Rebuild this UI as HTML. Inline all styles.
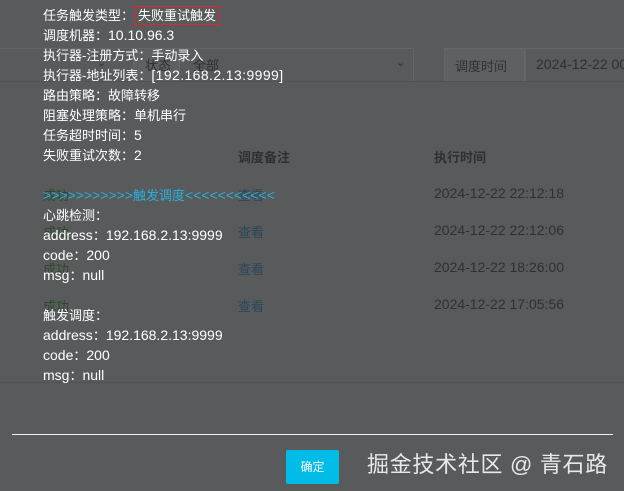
<!DOCTYPE html>
<html><head><meta charset="utf-8"><style>
html,body{margin:0;padding:0;}
body{width:624px;height:491px;background:#585a5c;position:relative;overflow:hidden;font-family:"Liberation Sans","Noto Sans CJK SC",sans-serif;}
.a{position:absolute;white-space:nowrap;}
.bg{color:#2e3133;font-size:13px;}
.w{color:#fff;font-size:13px;left:43px;}
.l{font-size:14px;}
</style></head><body>
<div class="a" style="left:0;top:48px;width:133px;height:32px;border:1px solid #626466;border-left:none;"></div>
<div class="a bg" style="left:97px;top:56px;font-size:11px;">⌄</div>
<div class="a" style="left:134px;top:48px;width:44px;height:32px;background:#5e6062;border:1px solid #646668;"></div>
<div class="a bg" style="left:145px;top:55px;">状态</div>
<div class="a" style="left:179px;top:48px;width:233px;height:32px;border:1px solid #646668;"></div>
<div class="a bg" style="left:193px;top:55px;">全部</div>
<div class="a bg" style="left:396px;top:56px;font-size:11px;">⌄</div>
<div class="a" style="left:444px;top:48px;width:80px;height:32px;background:#5e6062;border:1px solid #646668;"></div>
<div class="a bg" style="left:455px;top:56px;">调度时间</div>
<div class="a" style="left:524px;top:48px;width:110px;height:32px;border:1px solid #646668;"></div>
<div class="a bg l" style="left:536px;top:56px;">2024-12-22 00</div>
<div class="a" style="left:0;top:81px;width:624px;height:1px;background:#505254;"></div>
<div class="a bg" style="left:238px;top:147px;font-weight:bold;">调度备注</div>
<div class="a bg" style="left:434px;top:147px;font-weight:bold;">执行时间</div>
<div class="a bg" style="left:43px;top:185px;color:#2b4a2b;">成功</div>
<div class="a bg" style="left:238px;top:185px;color:#2b4757;">查看</div>
<div class="a bg l" style="left:434px;top:185px;">2024-12-22 22:12:18</div>
<div class="a bg" style="left:43px;top:222px;color:#2b4a2b;">成功</div>
<div class="a bg" style="left:238px;top:222px;color:#2b4757;">查看</div>
<div class="a bg l" style="left:434px;top:222px;">2024-12-22 22:12:06</div>
<div class="a bg" style="left:43px;top:259px;color:#2b4a2b;">成功</div>
<div class="a bg" style="left:238px;top:259px;color:#2b4757;">查看</div>
<div class="a bg l" style="left:434px;top:259px;">2024-12-22 18:26:00</div>
<div class="a bg" style="left:43px;top:296px;color:#2b4a2b;">成功</div>
<div class="a bg" style="left:238px;top:296px;color:#2b4757;">查看</div>
<div class="a bg l" style="left:434px;top:296px;">2024-12-22 17:05:56</div>
<div class="a" style="left:0;top:382px;width:624px;height:1px;background:#505254;"></div>
<div class="a w" style="top:5px;">任务触发类型：<span style="border:1.5px solid #e0262b;padding:1px 3px;">失败重试触发</span></div>
<div class="a w" style="top:25px;">调度机器：<span class="l">10.10.96.3</span></div>
<div class="a w" style="top:45px;">执行器-注册方式：手动录入</div>
<div class="a w" style="top:65px;">执行器-地址列表：<span class="l" style="letter-spacing:0.4px">[192.168.2.13:9999]</span></div>
<div class="a w" style="top:85px;">路由策略：故障转移</div>
<div class="a w" style="top:105px;">阻塞处理策略：单机串行</div>
<div class="a w" style="top:125px;">任务超时时间：<span class="l">5</span></div>
<div class="a w" style="top:145px;">失败重试次数：<span class="l">2</span></div>
<div class="a w" style="top:185px;color:#2ab0dc;"><span class="l">&gt;&gt;&gt;&gt;&gt;&gt;&gt;&gt;&gt;&gt;&gt;</span>触发调度<span class="l">&lt;&lt;&lt;&lt;&lt;&lt;&lt;&lt;&lt;&lt;&lt;</span></div>
<div class="a w" style="top:205px;">心跳检测：</div>
<div class="a w" style="top:225px;"><span class="l">address</span>：<span class="l">192.168.2.13:9999</span></div>
<div class="a w" style="top:245px;"><span class="l">code</span>：<span class="l">200</span></div>
<div class="a w" style="top:265px;"><span class="l">msg</span>：<span class="l">null</span></div>
<div class="a w" style="top:305px;">触发调度：</div>
<div class="a w" style="top:325px;"><span class="l">address</span>：<span class="l">192.168.2.13:9999</span></div>
<div class="a w" style="top:345px;"><span class="l">code</span>：<span class="l">200</span></div>
<div class="a w" style="top:365px;"><span class="l">msg</span>：<span class="l">null</span></div>
<div class="a" style="left:12px;top:434px;width:601px;height:1px;background:#f0f0f0;"></div>
<div class="a" style="left:286px;top:450px;width:53px;height:34px;background:#00bce6;border-radius:2px;color:#fff;font-size:12px;text-align:center;line-height:34px;">确定</div>
<div class="a" style="left:367px;top:447px;color:#e8e8e8;font-size:22px;letter-spacing:0.7px;">掘金技术社区 @ 青石路</div>
</body></html>
